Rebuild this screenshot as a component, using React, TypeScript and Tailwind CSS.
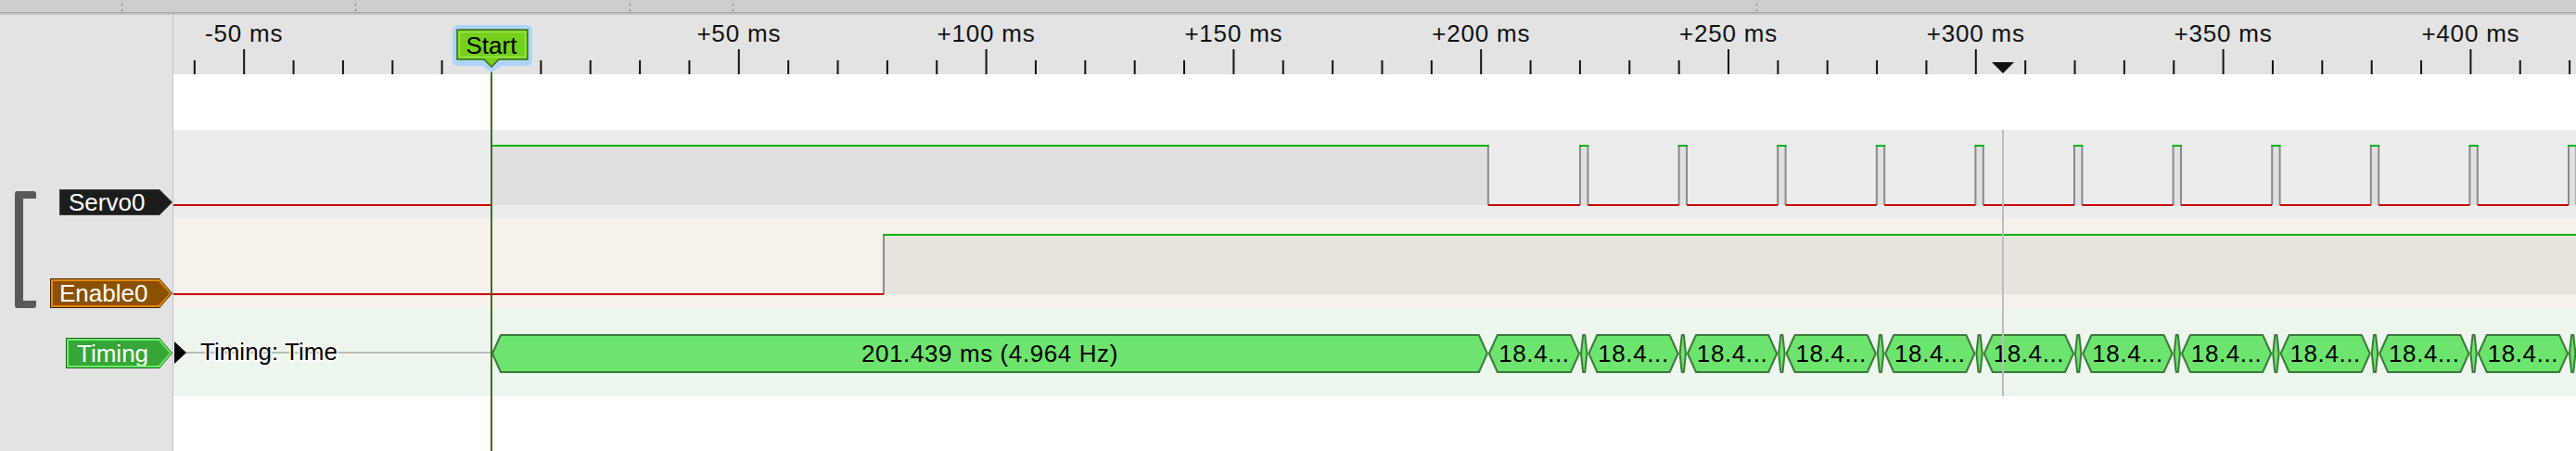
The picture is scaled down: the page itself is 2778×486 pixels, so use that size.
import React from "react";

// waveform pane starts at x=187; t=0 sits at x=530 on the page
const PX_MS = 5.336;
const X0 = 343;
const PANE_W = 2591;
const xAt = (ms: number) => X0 + ms * PX_MS;

const FIRST_FALL = xAt(201.439);
const FIRST_RISE = 1517;
const PERIOD = 106.6;
const PULSE = 8.4;
const ENABLE_RISE = 766;
const CURSOR_X = 1973;

const rises = Array.from({ length: 11 }, (_, i) => FIRST_RISE + i * PERIOD);
const falls = rises.map((r) => r + PULSE);

const highs: [number, number][] = [
  [X0, FIRST_FALL],
  ...rises.map((r, i) => [r, falls[i]] as [number, number]),
];
const lows: [number, number][] = [
  [0, X0],
  [FIRST_FALL, rises[0]],
  ...falls.map((f, i) => [f, rises[i + 1] ?? PANE_W] as [number, number]),
];
const edges = [X0, FIRST_FALL, ...rises, ...falls];

type Frame = { x0: number; x1: number; label?: string };
const frames: Frame[] = [{ x0: X0, x1: FIRST_FALL, label: "201.439 ms (4.964 Hz)" }];
rises.forEach((r, i) => {
  frames.push({ x0: i === 0 ? FIRST_FALL : falls[i - 1], x1: r, label: "18.4..." });
  frames.push({ x0: r, x1: falls[i] });
});
frames.push({ x0: falls[10], x1: falls[10] + 98.2, label: "18.4..." });

const ticks = Array.from({ length: 49 }, (_, i) => -60 + i * 10);
const labels = Array.from({ length: 10 }, (_, i) => -50 + i * 50);

const fmt = (t: number) => (t === 0 ? "0" : t < 0 ? `${t} ms` : `+${t} ms`);

function hex(x0: number, x1: number, top: number, bot: number) {
  const a = x0 + 1;
  const b = x1 - 1;
  const mid = (top + bot) / 2;
  const i = Math.min(9, (b - a) / 3);
  return `${a},${mid} ${a + i},${top} ${b - i},${top} ${b},${mid} ${b - i},${bot} ${a + i},${bot}`;
}

function Ruler() {
  return (
    <div className="h-[64px] bg-[#e3e3e3]">
      <svg width={PANE_W} height={64}>
        {ticks.map((t) => (
          <line
            key={t}
            x1={xAt(t)}
            x2={xAt(t)}
            y1={t % 50 === 0 ? 37 : 49}
            y2={64}
            stroke="#111"
            strokeWidth={2}
          />
        ))}
        {labels.map((t) => (
          <text
            key={t}
            x={xAt(t)}
            y={29}
            textAnchor="middle"
            fontSize={26}
            letterSpacing={0.8}
            fill="#111"
          >
            {fmt(t)}
          </text>
        ))}
        <polygon
          points={`${CURSOR_X - 12},51 ${CURSOR_X + 12},51 ${CURSOR_X},63`}
          fill="#111"
        />
      </svg>
    </div>
  );
}

function ServoTrace() {
  return (
    <div className="h-[96px] bg-[#ececec]">
      <svg width={PANE_W} height={96}>
        {highs.map(([a, b]) => (
          <rect key={a} x={a} y={17} width={b - a} height={64} fill="#e0e0e0" />
        ))}
        {edges.map((x) => (
          <line key={x} x1={x} x2={x} y1={17} y2={81} stroke="#8a8a8a" strokeWidth={2} />
        ))}
        {lows.map(([a, b]) => (
          <line key={a} x1={a} x2={b} y1={81} y2={81} stroke="#cc0000" strokeWidth={2} />
        ))}
        {highs.map(([a, b]) => (
          <line key={a} x1={a - 1} x2={b + 1} y1={17} y2={17} stroke="#00b300" strokeWidth={2} />
        ))}
      </svg>
    </div>
  );
}

function EnableTrace() {
  return (
    <div className="h-[96px] bg-[#f6f1eb]">
      <svg width={PANE_W} height={96}>
        <rect x={ENABLE_RISE} y={17} width={PANE_W - ENABLE_RISE} height={63} fill="#e8e4dd" />
        <line x1={ENABLE_RISE} x2={PANE_W} y1={80} y2={80} stroke="#dcd7d0" strokeWidth={1} />
        <line x1={ENABLE_RISE} x2={ENABLE_RISE} y1={17} y2={81} stroke="#8a8a8a" strokeWidth={2} />
        <line x1={0} x2={ENABLE_RISE} y1={81} y2={81} stroke="#cc0000" strokeWidth={2} />
        <line x1={ENABLE_RISE - 1} x2={PANE_W} y1={17} y2={17} stroke="#00b300" strokeWidth={2} />
      </svg>
    </div>
  );
}

function TimingTrace() {
  return (
    <div className="h-[95px] bg-[#edf6ed]">
      <svg width={PANE_W} height={95}>
        <line x1={14} x2={X0} y1={48} y2={48} stroke="#a3aba3" strokeWidth={1.5} />
        <polygon points="1,36 14,48 1,60" fill="#000" />
        <text
          x={29}
          y={56}
          fontSize={26}
          fill="#000"
          stroke="#fff"
          strokeWidth={3}
          paintOrder="stroke"
        >
          Timing: Time
        </text>
        {frames.map((f) => (
          <g key={f.x0}>
            <polygon
              points={hex(f.x0, f.x1, 29, 69)}
              fill="#6de46d"
              stroke="#3a7b3a"
              strokeWidth={2}
              strokeLinejoin="round"
            />
            {f.label && (
              <text
                x={(f.x0 + f.x1) / 2}
                y={58}
                textAnchor="middle"
                fontSize={26}
                letterSpacing={0.6}
                fill="#000"
              >
                {f.label}
              </text>
            )}
          </g>
        ))}
      </svg>
    </div>
  );
}

function StartFlag() {
  return (
    <div className="absolute left-[299px] top-[10px]">
      <svg width={90} height={52}>
        <rect x={2} y={1} width={86} height={44} rx={6} fill="#afd4fb" />
        <polygon points="32,44 44,52 56,44" fill="#afd4fb" />
        <rect x={7} y={6} width={76} height={32} fill="#76d11c" stroke="#3b6b19" strokeWidth={1.5} />
        <rect x={9.5} y={8.5} width={71} height={27} fill="none" stroke="#a6ea5a" strokeWidth={1} />
        <polygon points="36,37 44,46 52,37" fill="#76d11c" />
        <polyline points="36,38 44,46 52,38" fill="none" stroke="#3b6b19" strokeWidth={1.5} />
        <text x={44} y={32} textAnchor="middle" fontSize={26} fill="#000">
          Start
        </text>
      </svg>
    </div>
  );
}

function Tag({
  text,
  width,
  outer,
  inner,
  fill,
  ring,
  pad,
}: {
  text: string;
  width: number;
  outer: string;
  inner: string;
  fill: string;
  ring: string;
  pad: string;
}) {
  return (
    <div
      className={`${outer} p-px [clip-path:polygon(0_0,calc(100%_-_14px)_0,100%_50%,calc(100%_-_14px)_100%,0_100%)]`}
      style={{ width }}
    >
      <div
        className={`${inner} ${ring} h-full [clip-path:polygon(0_0,calc(100%_-_13px)_0,100%_50%,calc(100%_-_13px)_100%,0_100%)]`}
      >
        <div
          className={`${fill} ${pad} flex h-full items-center text-[26px] leading-none text-white [clip-path:polygon(0_0,calc(100%_-_12px)_0,100%_50%,calc(100%_-_12px)_100%,0_100%)]`}
        >
          {text}
        </div>
      </div>
    </div>
  );
}

function ChannelList() {
  return (
    <div className="w-[187px] shrink-0 border-r border-[#c4c4c4] bg-[#e3e3e3] pt-[188px]">
      <div className="flex">
        <div className="ml-[16px] mt-[2px] h-[126px] w-[23px] rounded-[3px] border-y-[8px] border-l-[9px] border-[#575a57]" />
        <div className="flex flex-1 flex-col items-end gap-[62px]">
          <div className="h-[34px]">
            <Tag
              text="Servo0"
              width={122}
              outer="bg-[#3c3c3c]"
              inner="bg-[#1b1d1d]"
              ring="p-0"
              fill="bg-[#1b1d1d]"
              pad="pl-[9px]"
            />
          </div>
          <div className="h-[33px]">
            <Tag
              text="Enable0"
              width={132}
              outer="bg-[#3a2200]"
              inner="bg-[#e8880f]"
              ring="p-[2px]"
              fill="bg-[#8c5100]"
              pad="pl-[7px]"
            />
          </div>
        </div>
      </div>
      <div className="mt-[31px] flex h-[33px] justify-end">
        <Tag
          text="Timing"
          width={115}
          outer="bg-[#1d5a1d]"
          inner="bg-[#6af26a]"
          ring="p-[2px]"
          fill="bg-[#36a636]"
          pad="pl-[9px]"
        />
      </div>
    </div>
  );
}

export default function App() {
  const grips = [131, 383, 679, 790, 1894];
  return (
    <div className="flex h-[486px] w-[2778px] flex-col overflow-hidden bg-white font-['Liberation_Sans',Arial,sans-serif]">
      <div className="h-[13px] bg-[#cecece]">
        <svg width={2778} height={13}>
          {grips.map((x) => (
            <g key={x} fill="#6a6a6a">
              <rect x={x} y={4} width={1} height={2} />
              <rect x={x} y={10} width={1} height={2} />
            </g>
          ))}
        </svg>
      </div>
      <div className="h-px bg-[#a9a9a9]" />
      <div className="h-[2px] bg-[#c2c2c2]" />

      <div className="flex flex-1">
        <ChannelList />
        <div className="relative flex flex-1 flex-col">
          <Ruler />
          <div className="h-[60px] bg-white" />
          <ServoTrace />
          <EnableTrace />
          <TimingTrace />
          <div className="flex-1 bg-white" />

          <div className="absolute left-[342px] top-[56px] bottom-0 w-[2px] bg-[#3d6e1c]" />
          <div className="absolute left-[1972px] top-[124px] h-[287px] w-[2px] bg-[#bcbcbc]" />
          <StartFlag />
        </div>
      </div>
    </div>
  );
}
